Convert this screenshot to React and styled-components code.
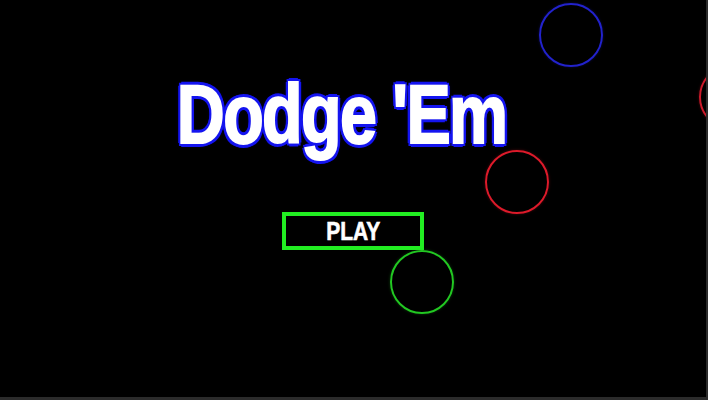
import React from 'react';
import styled, { createGlobalStyle } from 'styled-components';

const GlobalStyle = createGlobalStyle`
  html, body { margin: 0; padding: 0; background: #2b2b2b; }
  body { font-family: "Liberation Sans", Arial, sans-serif; }
`;

const Canvas = styled.div`
  position: relative; width: 706px; height: 397px; background: #000; overflow: hidden;
  display: flex; flex-direction: column; align-items: center; padding-top: 71px; box-sizing: border-box;
`;

const Title = styled.h1`
  margin: 0 22px 0 0; font-size: 84px; line-height: 86px; font-weight: 700; letter-spacing: -2px;
  color: #fff; display: inline-block; transform: scaleX(0.79); white-space: nowrap;
  -webkit-text-stroke: 2px #fff;
  text-shadow:
    4px 0 0 #1414f0, -4px 0 0 #1414f0, 0 4px 0 #1414f0, 0 -4px 0 #1414f0,
    3px 3px 0 #1414f0, -3px 3px 0 #1414f0, 3px -3px 0 #1414f0, -3px -3px 0 #1414f0,
    0 0 6px #0000aa;
`;

const PlayButton = styled.button`
  margin-top: 55px; width: 142px; height: 38px; box-sizing: border-box;
  background: #000; border: 4px solid #22ee22; color: #fff;
  font-family: "Liberation Sans", Arial, sans-serif;
  font-size: 25px; font-weight: 700; line-height: 1; padding: 0; cursor: pointer;
`;

const Label = styled.span`
  display: inline-block; transform: scaleX(0.84);
  -webkit-text-stroke: 0.6px #fff;
`;

const Ball = styled.div`
  position: absolute; width: 60px; height: 60px; border-radius: 50%;
  border: 2px solid ${p => p.$color};
  box-shadow: 0 0 3px ${p => p.$color}55;
`;

const balls = [
  { x: 539, y: 3, color: '#2222cc' },
  { x: 485, y: 150, color: '#dd1a2a' },
  { x: 390, y: 250, color: '#22c822' },
  { x: 699, y: 65, color: '#cc1a2a' },
];

const App = () => (
  <>
    <GlobalStyle />
    <Canvas>
      {balls.map((b, i) => (
        <Ball key={i} $color={b.color} style={{ left: b.x, top: b.y }} />
      ))}
      <Title>Dodge 'Em</Title>
      <PlayButton><Label>PLAY</Label></PlayButton>
    </Canvas>
  </>
);

export default App;
